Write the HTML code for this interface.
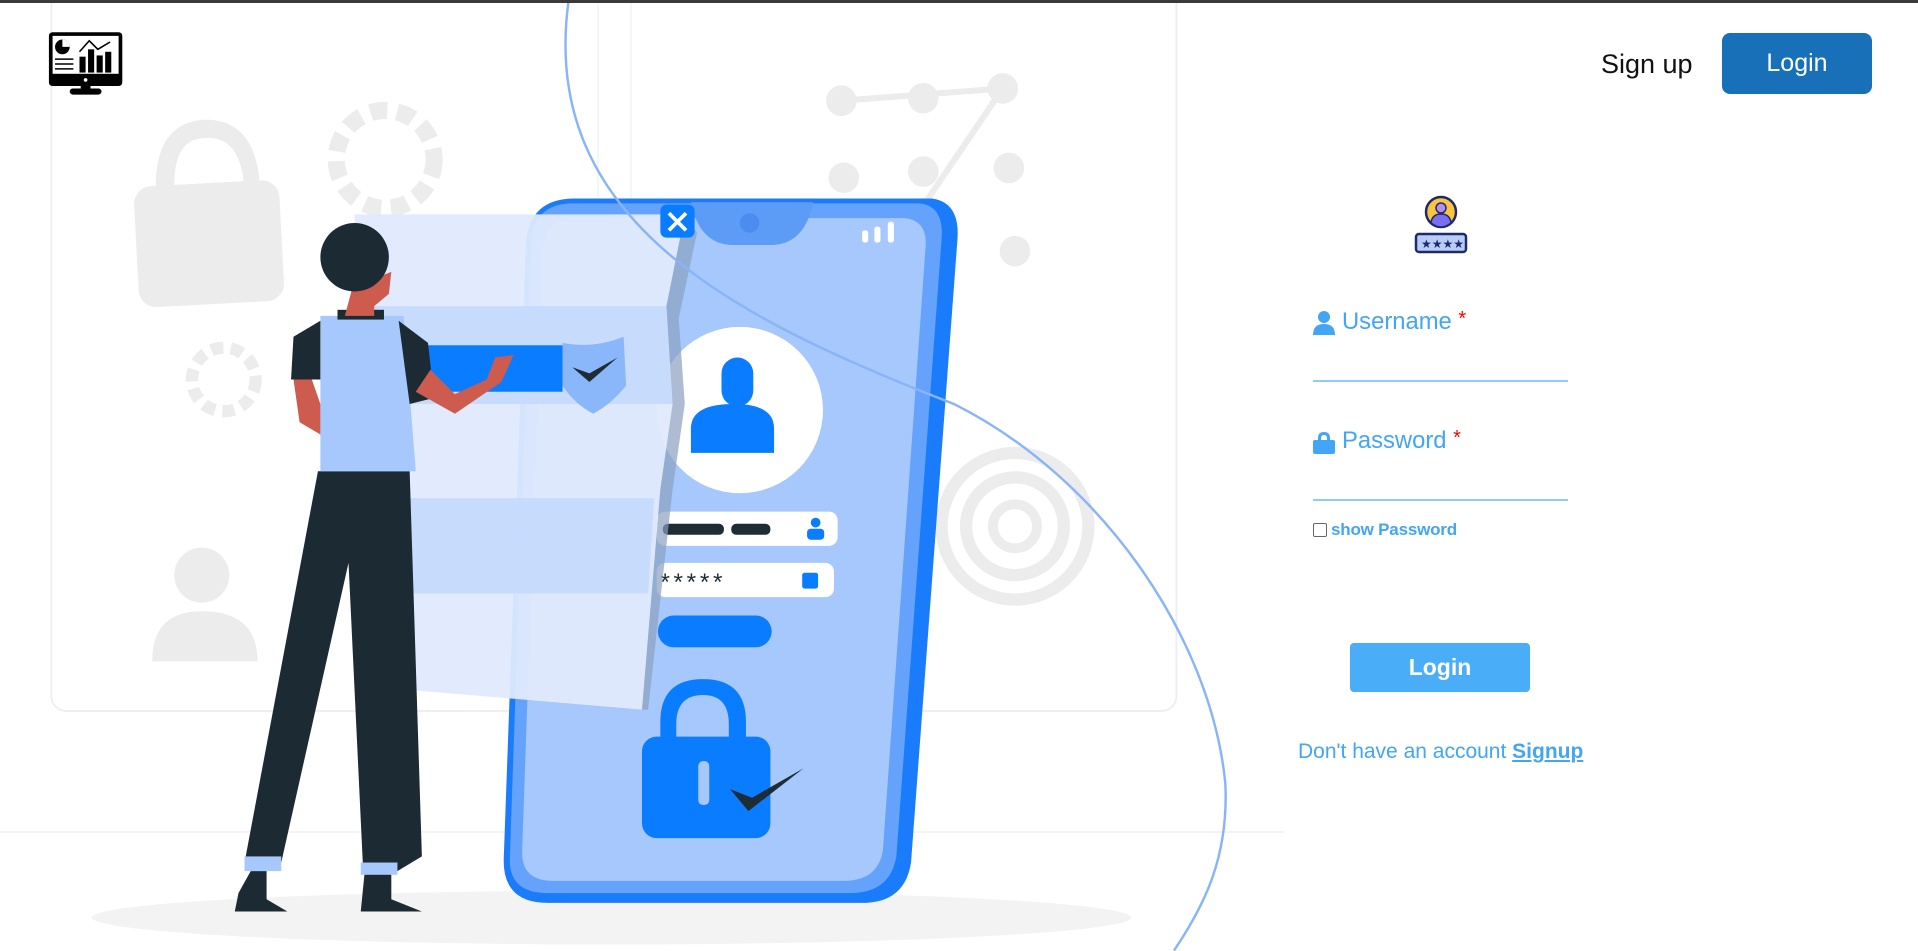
<!DOCTYPE html>
<html><head><meta charset="utf-8"><style>
html,body{margin:0;padding:0;width:1918px;height:951px;overflow:hidden;background:#fff;font-family:"Liberation Sans",sans-serif}
.top{position:absolute;left:0;top:0;width:1918px;height:3px;background:#3a3a3a}
.abs{position:absolute}
.lbl{color:#42a5f5;font-size:23.8px;white-space:nowrap}
.star{color:#f00;font-size:20px;position:relative;top:-4px}
.line{height:2px;background:#90caf9;width:255px}
</style></head><body>
<svg class="abs" style="left:0;top:0" width="1284" height="951" viewBox="0 0 1050 777">
<rect x="42" y="-10" width="920" height="591" rx="12" fill="#fff" stroke="#eee" stroke-width="1.5"/>
<line x1="489" y1="0" x2="489" y2="170" stroke="#f0f0f0"/>
<line x1="516" y1="0" x2="516" y2="170" stroke="#f0f0f0"/>
<line x1="0" y1="680" x2="1050" y2="680" stroke="#eee"/>
<ellipse cx="500" cy="750" rx="425" ry="22" fill="#f3f3f3"/>
<g fill="#ececec" stroke="#ececec">
<path d="M128 160 Q125 100 168 98 Q208 98 212 150 L200 150 Q196 110 168 112 Q140 112 142 158Z"/>
<rect x="112" y="150" width="118" height="98" rx="14" transform="rotate(-3 170 200)"/>
<circle cx="315" cy="130" r="40" fill="none" stroke-width="14" stroke-dasharray="14 8"/>
<circle cx="183" cy="310" r="26" fill="none" stroke-width="10" stroke-dasharray="10 6"/>
<circle cx="165" cy="470" r="22"/>
<path d="M125 540 Q125 500 165 500 Q210 500 210 540Z"/>
<circle cx="830" cy="430" r="60" fill="none" stroke-width="10"/>
<circle cx="830" cy="430" r="40" fill="none" stroke-width="10"/>
<circle cx="830" cy="430" r="18" fill="none" stroke-width="8"/>
<circle cx="688" cy="82" r="12"/><circle cx="755" cy="80" r="12"/><circle cx="820" cy="72" r="12"/>
<circle cx="690" cy="145" r="12"/><circle cx="755" cy="140" r="12"/><circle cx="825" cy="137" r="12"/>
<circle cx="830" cy="205" r="12"/>
<path d="M688 82 L820 72 L740 190" fill="none" stroke-width="5"/>
</g>
<path d="M470 162 L762 162 Q785 165 783 195 L745 705 Q740 738 705 738 L448 738 Q410 738 412 700 L430 200 Q432 162 470 162Z" fill="#1a7cfb"/>
<path d="M468 166 L752 166 Q772 168 770 195 L733 700 Q728 730 695 730 L448 730 Q415 730 417 700 L434 200 Q436 166 468 166Z" fill="#64a2fb"/>
<path d="M470 178 L740 178 Q758 180 757 200 L722 695 Q718 720 690 720 L452 720 Q426 720 427 695 L444 205 Q446 178 470 178Z" fill="#a6c8fc"/>
<path d="M565 165 L665 165 Q658 200 630 200 L600 200 Q572 200 565 165Z" fill="#5c9cf7"/>
<circle cx="613" cy="182" r="8" fill="#4a8cf0"/>
<g fill="#fff"><rect x="705" y="188" width="5" height="10" rx="2"/><rect x="715" y="185" width="5" height="13" rx="2"/><rect x="726" y="181" width="5" height="17" rx="2"/></g>
<circle cx="605" cy="335" r="68" fill="#fff"/>
<rect x="590" y="292" width="26" height="40" rx="13" fill="#0a7cff"/>
<path d="M565 370 L565 350 Q565 330 600 330 Q633 330 633 350 L633 370Z" fill="#0a7cff"/>
<rect x="537" y="418" width="148" height="28" rx="7" fill="#fff"/>
<rect x="542" y="428" width="50" height="9" rx="4" fill="#1e2d35"/><rect x="598" y="428" width="32" height="9" rx="4" fill="#1e2d35"/>
<circle cx="667" cy="427" r="4" fill="#0a7cff"/><rect x="660" y="432" width="14" height="9" rx="3" fill="#0a7cff"/>
<rect x="537" y="460" width="145" height="28" rx="7" fill="#fff"/>
<text x="540" y="482" font-size="20" fill="#1e2d35" font-family="Liberation Sans" letter-spacing="3">*****</text>
<rect x="656" y="468" width="13" height="13" rx="2" fill="#0a7cff"/>
<rect x="538" y="503" width="93" height="26" rx="13" fill="#0a7cff"/>
<path d="M540 612 L540 590 Q540 555 575 555 Q610 555 610 590 L610 612 L596 612 L596 592 Q596 568 575 568 Q553 568 553 592 L553 612Z" fill="#0a7cff"/>
<rect x="525" y="602" width="105" height="83" rx="12" fill="#0a7cff"/>
<rect x="571" y="622" width="9" height="36" rx="4" fill="#a6c8fc"/>
<path d="M597 645 L612 663 L657 628 L615 652 Z" fill="#1e2d35"/>
<polygon points="290,175 560,175 545,250 550,330 540,400 525,580 290,560" fill="#dfeafd" opacity="0.95"/>
<polygon points="290,250 545,250 550,330 290,330" fill="#c4d9fd" opacity="0.9"/>
<polygon points="290,407 535,407 530,485 290,485" fill="#c4d9fd" opacity="0.9"/>
<polygon points="560,175 570,190 555,260 560,330 550,400 530,580 525,580 540,400 550,330 545,250" fill="#8aa0c0" opacity="0.7"/>
<rect x="540" y="167" width="28" height="27" rx="5" fill="#0a7cff"/>
<path d="M547 174 L561 188 M561 174 L547 188" stroke="#fff" stroke-width="3"/>
<rect x="350" y="282" width="110" height="38" fill="#0a7cff"/>
<path d="M460 280 Q485 285 510 275 L512 315 Q500 330 485 338 Q470 330 460 315Z" fill="#8ab6fa"/>
<path d="M468 300 L482 312 L505 292 L482 305Z" fill="#1e2d35"/>
<path d="M260 385 L335 385 L345 700 L325 712 L297 712 L285 460 L230 705 L200 705 Z" fill="#1c2b33"/>
<rect x="200" y="700" width="30" height="12" fill="#a6c8fc"/><rect x="295" y="705" width="30" height="10" fill="#a6c8fc"/>
<path d="M205 712 L218 712 L218 735 L235 745 L192 745 L195 730Z" fill="#1c2b33"/>
<path d="M298 715 L320 715 L320 735 L345 745 L295 745Z" fill="#1c2b33"/>
<path d="M262 258 L330 258 L340 385 L262 385Z" fill="#a6c8fc"/>
<path d="M262 262 L240 275 L238 310 L262 310Z" fill="#1c2b33"/>
<path d="M326 262 L350 280 L355 325 L335 330Z" fill="#1c2b33"/>
<path d="M240 310 L245 345 L262 355 L262 330 L255 310Z" fill="#cd5c4e"/>
<path d="M340 320 L372 338 L410 312 L420 290 L405 292 L398 310 L372 322 L352 302Z" fill="#cd5c4e"/>
<rect x="276" y="253" width="38" height="8" fill="#1c2b33"/>
<path d="M282 258 L290 228 L312 225 L320 222 L318 240 L306 250 L306 258Z" fill="#cd5c4e"/>
<circle cx="290" cy="210" r="28" fill="#1c2b33"/>
<path d="M465 0 C440 180 600 260 780 330 C900 390 990 520 1002 640 C1005 700 985 740 960 777" fill="none" stroke="#8ab4f8" stroke-width="2"/>
<g>
<rect x="40" y="26" width="60" height="44" rx="3" fill="#000"/>
<rect x="43" y="29" width="54" height="31" fill="#fff"/>
<circle cx="51" cy="38" r="6" fill="#000"/><path d="M51 38 L57 38 A6 6 0 0 0 51 32Z" fill="#fff"/>
<g stroke="#000" stroke-width="1.2"><line x1="45" y1="48" x2="60" y2="48"/><line x1="45" y1="52" x2="60" y2="52"/><line x1="45" y1="56" x2="60" y2="56"/></g>
<g fill="#000"><rect x="65" y="46" width="5" height="13"/><rect x="72" y="40" width="5" height="19"/><rect x="79" y="45" width="5" height="14"/><rect x="86" y="42" width="5" height="17"/></g>
<path d="M65 42 L73 33 L80 40 L90 34" fill="none" stroke="#000" stroke-width="1.3"/>
<circle cx="70" cy="65" r="1.5" fill="#fff"/>
<rect x="57" y="72" width="26" height="5" rx="2.5" fill="#000"/><rect x="66" y="69" width="8" height="4" fill="#000"/>
</g>
</svg>
<div class="top"></div>
<div class="abs" style="left:1601px;top:49px;font-size:27px;color:#111">Sign up</div>
<div class="abs" style="left:1722px;top:33px;width:150px;height:61px;background:#1770b8;border-radius:8px;color:#fff;font-size:25px;text-align:center;line-height:61px">Login</div>
<svg class="abs" style="left:1412px;top:193px" width="58" height="62" viewBox="0 0 58 62">
<circle cx="29" cy="19" r="15" fill="#f9c440" stroke="#1f2a6b" stroke-width="2.5"/>
<circle cx="29" cy="15" r="5" fill="#b48ff0" stroke="#1f2a6b" stroke-width="1.5"/>
<path d="M19 30 Q20 21 29 21 Q38 21 39 30 Q34 34 29 34 Q24 34 19 30Z" fill="#7a6ff0" stroke="#1f2a6b" stroke-width="1.5"/>
<rect x="4" y="41" width="50" height="18" rx="3" fill="#b7cdf7" stroke="#1f2a6b" stroke-width="2.5"/>
<text x="9" y="55" font-size="12" fill="#1f2a6b" font-family="DejaVu Sans">★★★★</text>
</svg>
<svg class="abs" style="left:1313px;top:311px" width="22" height="24" viewBox="0 0 22 24"><circle cx="11" cy="6" r="6" fill="#42a5f5"/><path d="M0 24 Q0 13 11 13 Q22 13 22 24Z" fill="#42a5f5"/></svg>
<div class="abs lbl" style="left:1342px;top:308px">Username <span class="star">*</span></div>
<div class="abs line" style="left:1313px;top:380px"></div>
<svg class="abs" style="left:1313px;top:430px" width="22" height="24" viewBox="0 0 22 24"><path d="M5 11 V8 Q5 2 11 2 Q17 2 17 8 V11 H14 V8 Q14 5 11 5 Q8 5 8 8 V11Z" fill="#42a5f5"/><rect x="0" y="10" width="22" height="14" rx="2" fill="#42a5f5"/></svg>
<div class="abs lbl" style="left:1342px;top:427px">Password <span class="star">*</span></div>
<div class="abs line" style="left:1313px;top:499px"></div>
<div class="abs" style="left:1313px;top:523px;width:12px;height:12px;border:1.5px solid #666;border-radius:2px"></div>
<div class="abs" style="left:1331px;top:520px;font-size:17px;color:#42a5f5;font-weight:bold;letter-spacing:-0.2px">show Password</div>
<div class="abs" style="left:1350px;top:643px;width:180px;height:49px;background:#49adf8;border-radius:4px;color:#fff;font-size:23px;font-weight:bold;text-align:center;line-height:49px">Login</div>
<div class="abs" style="left:1298px;top:740px;font-size:21px;color:#42a5f5;white-space:nowrap">Don't have an account <b style="text-decoration:underline">Signup</b></div>
</body></html>
